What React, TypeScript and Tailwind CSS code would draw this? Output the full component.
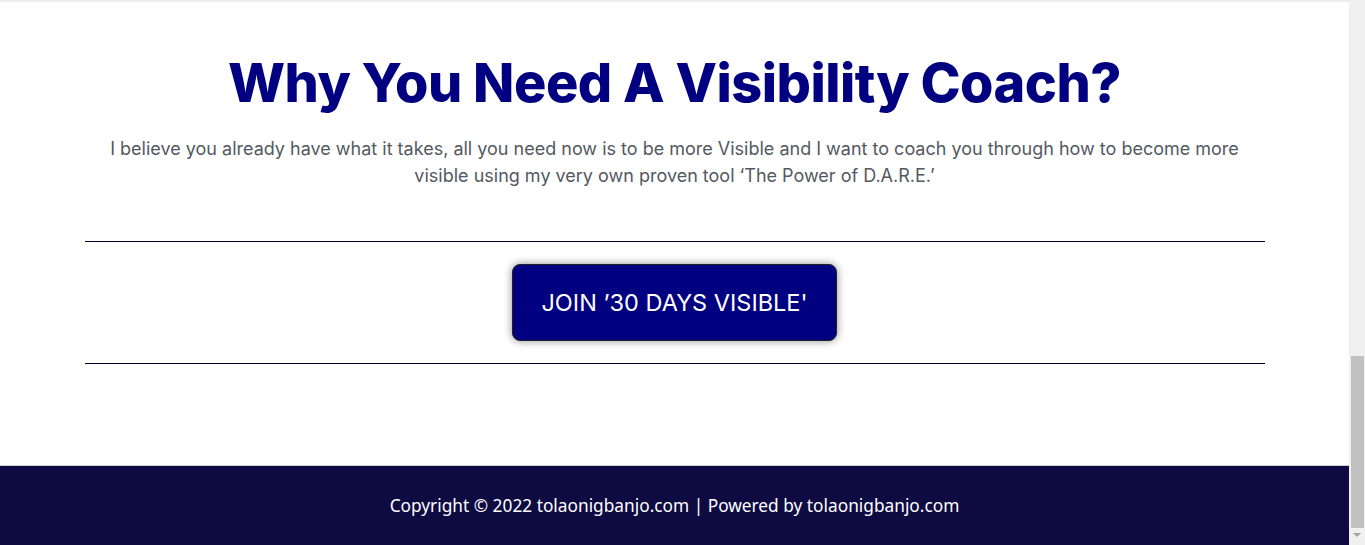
import React from "react";

export default function App() {
  return (
    <div className="flex w-[1365px] h-[545px] overflow-hidden bg-white">
      <div className="flex flex-col w-[1349px] h-[545px]">
        <div className="h-[2px] bg-[#eeeee6] shrink-0" />
        <section className="flex-1 flex flex-col items-center">
          <h1
            className="mt-[48px] text-[54px] leading-[66px] font-extrabold text-[#000080] text-center tracking-[-0.5px]"
            style={{ fontFamily: "Inter, 'Noto Sans', sans-serif" }}
          >
            Why You Need A Visibility Coach?
          </h1>
          <p
            className="mt-[19px] text-[18px] leading-[27px] text-[#54595f] text-center"
            style={{ fontFamily: "Inter, 'Noto Sans', sans-serif" }}
          >
            I believe you already have what it takes, all you need now is to be more Visible and I want to coach you through how to become more
            <br />
            visible using my very own proven tool ‘The Power of D.A.R.E.’
          </p>
          <div className="mt-[52px] w-[1180px] border-t border-[#000030]" />
          <div className="py-[22px]">
            <a
              href="#"
              className="flex items-center justify-center w-[325px] h-[77px] rounded-[8px] bg-[#000080] border border-[#222] text-white text-[23.5px] shadow-[0_0_8px_rgba(0,0,0,0.45)]"
              style={{ fontFamily: "Inter, 'Noto Sans', sans-serif" }}
            >
              JOIN ’30 DAYS VISIBLE'
            </a>
          </div>
          <div className="w-[1180px] border-t border-[#000030]" />
        </section>
        <footer
          className="h-[80px] shrink-0 bg-[#0e0a42] border-t border-[#d0d0d0] flex items-center justify-center text-white text-[17.3px]"
          style={{ fontFamily: "'Noto Sans', sans-serif" }}
        >
          Copyright © 2022 tolaonigbanjo.com | Powered by tolaonigbanjo.com
        </footer>
      </div>
      <div className="w-[16px] h-[545px] bg-[#f0f0f0] flex flex-col items-center">
        <div className="mt-[356px] w-[13px] h-[172px] bg-[#c1c1c1]" />
        <div className="mt-[5px] w-0 h-0 border-l-[4px] border-r-[4px] border-t-[4px] border-l-transparent border-r-transparent border-t-[#a3a3a3]" />
      </div>
    </div>
  );
}
